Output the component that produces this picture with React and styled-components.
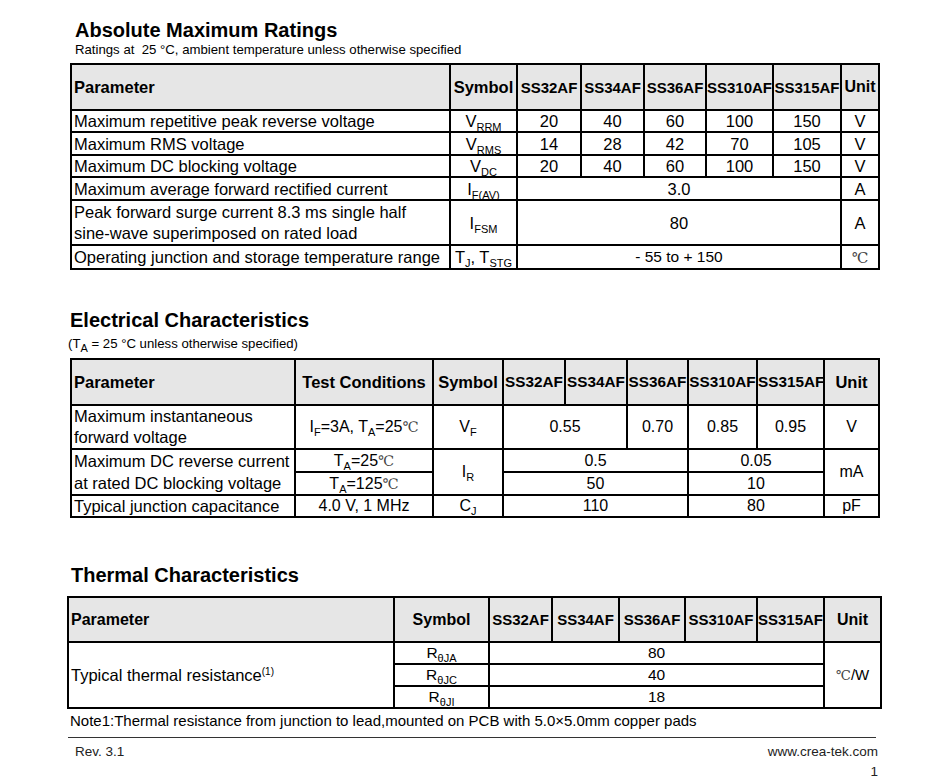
import React from "react";
import styled, { createGlobalStyle } from "styled-components";

const GlobalStyle = createGlobalStyle`
  html, body {
    margin: 0;
    padding: 0;
    background: #fff;
  }
  body {
    font-family: "Liberation Sans", Arial, sans-serif;
    color: #000;
  }
`;

const Page = styled.div`
  width: 952px;
  height: 784px;
  box-sizing: border-box;
  padding-top: 18px;
  display: flex;
  flex-direction: column;
  overflow: hidden;
`;

const Title = styled.h2`
  margin: ${(p) => p.$top || 0}px 0 0 ${(p) => p.$left}px;
  font-size: 20px;
  line-height: 24px;
  font-weight: 700;
`;

const Caption = styled.p`
  margin: ${(p) => p.$top || 0}px 0 0 ${(p) => p.$left}px;
  font-size: 13.2px;
  line-height: 16px;
`;

const Table = styled.table`
  margin: ${(p) => p.$top}px 0 0 ${(p) => p.$left}px;
  width: ${(p) => p.$width}px;
  border-collapse: collapse;
  table-layout: fixed;
  border: 2px solid #000;
`;

const Head = styled.th`
  background: #e6e6e6;
  border: 2px solid #000;
  font-size: ${(p) => p.$size || 15}px;
  font-weight: 700;
  text-align: ${(p) => p.$align || "center"};
  padding: 0 0 0 ${(p) => (p.$align === "left" ? 2 : 0)}px;
  white-space: nowrap;
  height: ${(p) => p.$h}px;
`;

const Cell = styled.td`
  border: 2px solid #000;
  font-size: ${(p) => p.$size || 16.5}px;
  text-align: ${(p) => p.$align || "center"};
  padding: 0 2px;
  height: ${(p) => p.$h || 20}px;
  line-height: ${(p) => p.$lh || 20}px;
  white-space: nowrap;
`;

const Sub = styled.sub`
  font-size: 11px;
  line-height: 0;
  vertical-align: -4px;
`;

const Sup = styled.sup`
  font-size: 10px;
  line-height: 0;
  vertical-align: 6px;
`;

const Deg = styled.span`
  font-family: "DejaVu Serif", "Liberation Serif", serif;
  font-size: 0.9em;
  color: #444;
`;

const Note = styled.p`
  margin: 4px 0 0 70px;
  font-size: 15px;
  line-height: 16px;
`;

const Rule = styled.div`
  margin: 8px 0 0 68px;
  width: 808px;
  border-top: 1px solid #333;
`;

const FooterRow = styled.div`
  margin: ${(p) => p.$top}px 0 0 75px;
  width: 803px;
  display: flex;
  justify-content: space-between;
  font-size: 13.5px;
  line-height: 16px;
  color: #222;
`;

const parts = ["SS32AF", "SS34AF", "SS36AF", "SS310AF", "SS315AF"];

function Cols({ widths }) {
  return (
    <colgroup>
      {widths.map((w, i) => (
        <col key={i} style={{ width: w }} />
      ))}
    </colgroup>
  );
}

function MaxRatings() {
  const rows = [
    ["Maximum repetitive peak reverse voltage", "V", "RRM", ["20", "40", "60", "100", "150"], 20],
    ["Maximum RMS voltage", "V", "RMS", ["14", "28", "42", "70", "105"], 21],
    ["Maximum DC blocking voltage", "V", "DC", ["20", "40", "60", "100", "150"], 20],
  ];
  return (
    <Table $top={5} $left={70} $width={808}>
      <Cols widths={[379, 67, 64, 63, 62, 67, 68, 38]} />
      <thead>
        <tr>
          <Head $align="left" $h={44} $size={16.5}>Parameter</Head>
          <Head $h={44} $size={16.5}>Symbol</Head>
          {parts.map((p) => (
            <Head key={p} $h={44}>{p}</Head>
          ))}
          <Head $h={44} $size={16}>Unit</Head>
        </tr>
      </thead>
      <tbody>
        {rows.map(([name, sym, sub, vals, h]) => (
          <tr key={name}>
            <Cell $align="left" $h={h}>{name}</Cell>
            <Cell $h={h}>
              {sym}
              <Sub>{sub}</Sub>
            </Cell>
            {vals.map((v, i) => (
              <Cell key={i} $h={h}>{v}</Cell>
            ))}
            <Cell $h={h}>V</Cell>
          </tr>
        ))}
        <tr>
          <Cell $align="left" $h={21}>Maximum average forward rectified current</Cell>
          <Cell $h={21}>
            I<Sub>F(AV)</Sub>
          </Cell>
          <Cell colSpan={5} $h={21}>3.0</Cell>
          <Cell $h={21}>A</Cell>
        </tr>
        <tr>
          <Cell $align="left" $h={43} $lh={21}>
            Peak forward surge current 8.3 ms single half
            <br />
            sine-wave superimposed on rated load
          </Cell>
          <Cell $h={43}>
            I<Sub>FSM</Sub>
          </Cell>
          <Cell colSpan={5} $h={43}>80</Cell>
          <Cell $h={43}>A</Cell>
        </tr>
        <tr>
          <Cell $align="left" $h={22}>Operating junction and storage temperature range</Cell>
          <Cell $h={22}>
            T<Sub>J</Sub>, T<Sub>STG</Sub>
          </Cell>
          <Cell colSpan={5} $h={22} $size={15.5}>- 55 to + 150</Cell>
          <Cell $h={22}>
            <Deg>℃</Deg>
          </Cell>
        </tr>
      </tbody>
    </Table>
  );
}

function Electrical() {
  return (
    <Table $top={6} $left={70} $width={808}>
      <Cols widths={[224, 138, 70, 62, 62, 61, 69, 67, 55]} />
      <thead>
        <tr>
          <Head $align="left" $h={44} $size={16.5}>Parameter</Head>
          <Head $h={44} $size={16.5}>Test Conditions</Head>
          <Head $h={44} $size={16.5}>Symbol</Head>
          {parts.map((p) => (
            <Head key={p} $h={44} $size={15.3}>{p}</Head>
          ))}
          <Head $h={44} $size={16.5}>Unit</Head>
        </tr>
      </thead>
      <tbody>
        <tr>
          <Cell $align="left" $h={40} $lh={21}>
            Maximum instantaneous
            <br />
            forward voltage
          </Cell>
          <Cell $h={40} $size={16}>
            I<Sub>F</Sub>=3A, T<Sub>A</Sub>=25<Deg>℃</Deg>
          </Cell>
          <Cell $h={40} $size={16}>
            V<Sub>F</Sub>
          </Cell>
          <Cell colSpan={2} $h={40} $size={16}>0.55</Cell>
          <Cell $h={40} $size={16}>0.70</Cell>
          <Cell $h={40} $size={16}>0.85</Cell>
          <Cell $h={40} $size={16}>0.95</Cell>
          <Cell $h={40} $size={16}>V</Cell>
        </tr>
        <tr>
          <Cell $align="left" rowSpan={2} $lh={22}>
            Maximum DC reverse current
            <br />
            at rated DC blocking voltage
          </Cell>
          <Cell $h={20} $size={16}>
            T<Sub>A</Sub>=25<Deg>℃</Deg>
          </Cell>
          <Cell rowSpan={2} $size={16}>
            I<Sub>R</Sub>
          </Cell>
          <Cell colSpan={3} $h={20} $size={16}>0.5</Cell>
          <Cell colSpan={2} $h={20} $size={16}>0.05</Cell>
          <Cell rowSpan={2} $size={16}>mA</Cell>
        </tr>
        <tr>
          <Cell $h={20} $size={16}>
            T<Sub>A</Sub>=125<Deg>℃</Deg>
          </Cell>
          <Cell colSpan={3} $h={20} $size={16}>50</Cell>
          <Cell colSpan={2} $h={20} $size={16}>10</Cell>
        </tr>
        <tr>
          <Cell $align="left" $h={20}>Typical junction capacitance</Cell>
          <Cell $h={20} $size={16}>4.0 V, 1 MHz</Cell>
          <Cell $h={20} $size={16}>
            C<Sub>J</Sub>
          </Cell>
          <Cell colSpan={3} $h={20} $size={16}>110</Cell>
          <Cell colSpan={2} $h={20} $size={16}>80</Cell>
          <Cell $h={20} $size={16}>pF</Cell>
        </tr>
      </tbody>
    </Table>
  );
}

function Thermal() {
  const rows = [
    ["JA", "80"],
    ["JC", "40"],
    ["JI", "18"],
  ];
  return (
    <Table $top={9} $left={67} $width={813}>
      <Cols widths={[326, 95, 63, 67, 66, 72, 67, 57]} />
      <thead>
        <tr>
          <Head $align="left" $h={43} $size={16}>Parameter</Head>
          <Head $h={43} $size={16}>Symbol</Head>
          {parts.map((p) => (
            <Head key={p} $h={43}>{p}</Head>
          ))}
          <Head $h={43} $size={16}>Unit</Head>
        </tr>
      </thead>
      <tbody>
        {rows.map(([sub, val], i) => (
          <tr key={sub}>
            {i === 0 && (
              <Cell $align="left" rowSpan={3}>
                Typical thermal resistance<Sup>(1)</Sup>
              </Cell>
            )}
            <Cell $h={20} $size={15.5}>
              R<Sub>θ{sub}</Sub>
            </Cell>
            <Cell colSpan={5} $h={20} $size={15.5}>{val}</Cell>
            {i === 0 && (
              <Cell rowSpan={3} $size={15}>
                <Deg>℃</Deg>/W
              </Cell>
            )}
          </tr>
        ))}
      </tbody>
    </Table>
  );
}

export default function App() {
  return (
    <>
      <GlobalStyle />
      <Page>
        <Title $left={75}>Absolute Maximum Ratings</Title>
        <Caption $left={75}>Ratings at&nbsp; 25 °C, ambient temperature unless otherwise specified</Caption>
        <MaxRatings />

        <Title $left={70} $top={38}>Electrical Characteristics</Title>
        <Caption $left={68} $top={4}>
          (T<Sub>A</Sub> = 25 °C unless otherwise specified)
        </Caption>
        <Electrical />

        <Title $left={71} $top={45}>Thermal Characteristics</Title>
        <Thermal />

        <Note>Note1:Thermal resistance from junction to lead,mounted on PCB with 5.0×5.0mm copper pads</Note>
        <Rule />
        <FooterRow $top={6}>
          <span>Rev. 3.1</span>
          <span>www.crea-tek.com</span>
        </FooterRow>
        <FooterRow $top={4}>
          <span />
          <span>1</span>
        </FooterRow>
      </Page>
    </>
  );
}
